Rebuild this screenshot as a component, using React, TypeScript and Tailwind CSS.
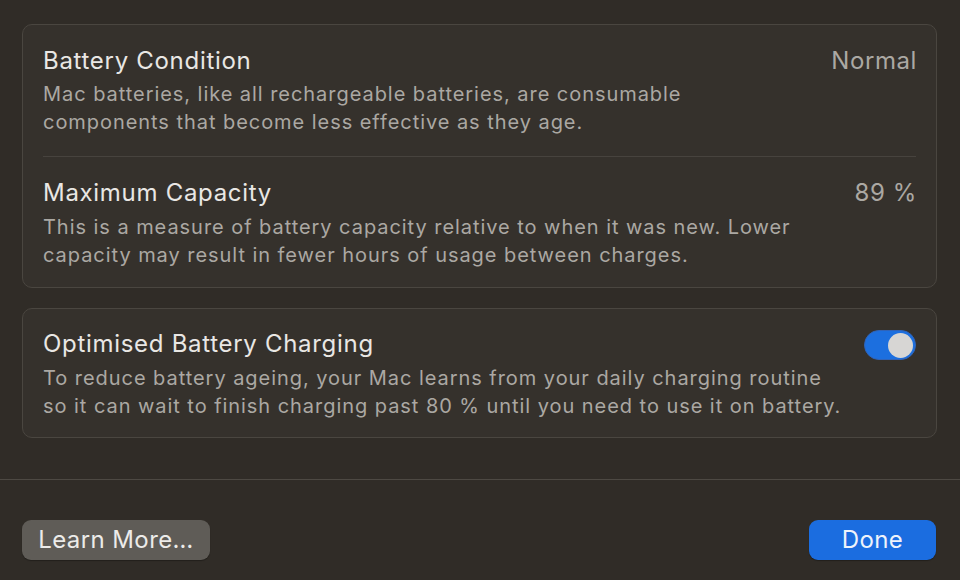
const font = { fontFamily: "Inter, 'Noto Sans', sans-serif" };

function Row({
  title,
  value,
  tight,
  children,
}: {
  title: string;
  value?: React.ReactNode;
  tight?: boolean;
  children: React.ReactNode;
}) {
  return (
    <div className="flex items-start justify-between gap-2">
      <div className="flex min-w-0 flex-col">
        <div className="text-[24px] leading-[32px] tracking-[0.7px] text-[#e9e7e4]">{title}</div>
        <div
          className={
            tight
              ? "mt-[3px] whitespace-nowrap text-[20px] leading-[28px] tracking-[0.95px] text-[#aba8a3]"
              : "mt-[4px] whitespace-nowrap text-[20px] leading-[28px] tracking-[0.95px] text-[#aba8a3]"
          }
        >
          {children}
        </div>
      </div>
      {value}
    </div>
  );
}

function Value({ children }: { children: React.ReactNode }) {
  return (
    <span className="mr-[-1px] text-[24px] leading-[32px] tracking-[0.6px] text-[#aba8a3]">{children}</span>
  );
}

function Toggle() {
  return (
    <div className="mt-[2px] flex h-[30px] w-[52px] shrink-0 items-center justify-end rounded-full border border-[#2f63b8] bg-[#1c6fdf] px-[2px]">
      <div className="h-[25px] w-[25px] rounded-full bg-[#d7d6d4]" />
    </div>
  );
}

export default function App() {
  return (
    <div
      className="flex h-[580px] w-[960px] flex-col overflow-hidden bg-[#302c27]"
      style={font}
    >
      <div className="flex flex-col gap-5 pl-[22px] pr-[23px] pt-6">
        {/* Battery health */}
        <div className="rounded-[10px] border border-[#4a4640] bg-[#35312c] pl-5 pr-[20px]">
          <div className="border-b border-[#47433e] pt-[20px] pb-[20px]">
            <Row title="Battery Condition" value={<Value>Normal</Value>} tight>
              Mac batteries, like all rechargeable batteries, are consumable
              <br />
              components that become less effective as they age.
            </Row>
          </div>
          <div className="pt-[20px] pb-[18px]">
            <Row title="Maximum Capacity" value={<Value>89 %</Value>}>
              This is a measure of battery capacity relative to when it was new. Lower
              <br />
              capacity may result in fewer hours of usage between charges.
            </Row>
          </div>
        </div>

        {/* Optimised charging */}
        <div className="rounded-[10px] border border-[#4a4640] bg-[#35312c] pl-5 pr-[20px] pt-[19px] pb-[17px]">
          <Row title="Optimised Battery Charging" value={<Toggle />}>
            To reduce battery ageing, your Mac learns from your daily charging routine
            <br />
            so it can wait to finish charging past 80 % until you need to use it on battery.
          </Row>
        </div>
      </div>

      <div className="mt-auto border-t border-[#4d4943]" />
      <div className="flex items-center justify-between pl-[22px] pr-[24px] pt-[40px] pb-[20px]">
        <button className="h-[40px] w-[188px] rounded-[9px] bg-[#5f5c57] text-[24px] tracking-[0.4px] text-[#ecebe9] shadow-[0_1px_1px_rgba(0,0,0,0.3)]">
          Learn More…
        </button>
        <button className="h-[40px] w-[127px] rounded-[9px] bg-[#1b6de0] text-[24px] tracking-[0.4px] text-[#eef3fb] shadow-[0_1px_1px_rgba(0,0,0,0.3)]">
          Done
        </button>
      </div>
    </div>
  );
}
